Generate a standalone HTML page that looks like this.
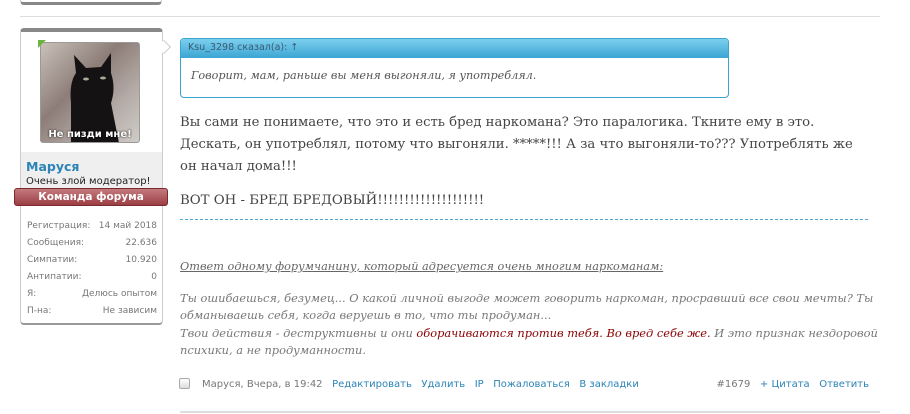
<!DOCTYPE html>
<html><head><meta charset="utf-8"><style>
*{margin:0;padding:0;box-sizing:border-box}
body{width:910px;height:414px;background:#fff;position:relative;overflow:hidden;font-family:"Liberation Sans",Tahoma,sans-serif}
.abs{position:absolute}
.sans{font-family:"DejaVu Sans","Liberation Sans",sans-serif}
.serif{font-family:"DejaVu Serif","Liberation Serif",serif}
.stat{position:absolute;left:27px;width:130px;font-size:9px;color:#777;font-family:"DejaVu Sans",sans-serif;display:flex;justify-content:space-between}
a{color:#2b83b8;text-decoration:none}
</style></head><body>
<div class="abs" style="left:20px;top:-6px;width:142px;height:11px;border:1px solid #ccc;border-bottom:3px solid #888;border-radius:0 0 4px 4px"></div>
<div class="abs" style="left:20px;top:16px;width:860px;height:1px;background:#ddd"></div>

<div class="abs" style="left:20px;top:28px;width:143px;height:297px;border:1px solid #ccc;border-top:4px solid #888;border-bottom:2px solid #999;border-radius:4px;background:#fff"></div>
<div class="abs" style="left:21px;top:152px;width:141px;height:36px;background:#efefef"></div>
<div class="abs" style="left:40px;top:42px;width:100px;height:101px;border:1px solid #999;border-radius:3px;background:linear-gradient(135deg,#c9c1b9,#8d7d78 40%,#b3aaa5 70%,#d0ccc8);overflow:hidden">
<svg width="100" height="100" style="position:absolute;left:0;top:0"><path d="M30 100 L30 60 Q28 40 35 30 L33 12 L45 25 L60 24 L70 10 L70 30 Q75 45 70 60 L78 100 Z" fill="#141212"/><ellipse cx="45" cy="36" rx="3" ry="1.5" fill="#aa9"/><ellipse cx="62" cy="35" rx="3" ry="1.5" fill="#aa9"/></svg>
<div class="sans" style="position:absolute;left:0;bottom:2px;width:100%;text-align:center;color:#fff;font-weight:bold;font-size:10px;text-shadow:0 0 2px #000">Не пизди мне!</div></div>
<div class="abs" style="left:38px;top:40px;width:0;height:0;border-top:8px solid #6db33f;border-right:8px solid transparent"></div>
<div class="abs" style="left:159px;top:42px;width:10px;height:10px;background:#fff;border-top:1px solid #ccc;border-right:1px solid #ccc;transform:rotate(45deg)"></div>
<div class="abs sans" style="left:26px;top:159px;font-size:12.5px;font-weight:bold;color:#2b83b8">Маруся</div>
<div class="abs sans" style="left:26px;top:176px;font-size:10px;color:#222">Очень злой модератор!</div>
<div class="abs sans" style="left:14px;top:188px;width:154px;height:18px;background:linear-gradient(#c47a7d,#9b3e44);border:1px solid #7a2a2f;border-radius:3px;color:#fff;font-size:10.5px;font-weight:bold;text-align:center;line-height:16px">Команда форума</div>
<div class="stat" style="top:221px"><span>Регистрация:</span><span>14 май 2018</span></div>
<div class="stat" style="top:238px"><span>Сообщения:</span><span>22.636</span></div>
<div class="stat" style="top:255px"><span>Симпатии:</span><span>10.920</span></div>
<div class="stat" style="top:272px"><span>Антипатии:</span><span>0</span></div>
<div class="stat" style="top:289px"><span>Я:</span><span>Делюсь опытом</span></div>
<div class="stat" style="top:306px"><span>П-на:</span><span>Не зависим</span></div>

<div class="abs" style="left:180px;top:38px;width:549px;height:60px;border:1px solid #3ba4d0;border-radius:4px;overflow:hidden">
<div class="sans" style="height:19px;background:linear-gradient(#7ccfee,#3ba5d3);color:#3a5a70;font-size:9.5px;padding:3px 7px">Ksu_3298 сказал(а): ↑</div>
<div class="serif" style="font-style:italic;font-size:11.2px;color:#555;padding:11px 10px">Говорит, мам, раньше вы меня выгоняли, я употреблял.</div></div>

<div class="abs serif" style="left:180px;top:112px;width:685px;font-size:13.2px;line-height:22px;color:#444">Вы сами не понимаете, что это и есть бред наркомана? Это паралогика. Ткните ему в это. Дескать, он употреблял, потому что выгоняли. *****!!! А за что выгоняли-то??? Употреблять же он начал дома!!!</div>
<div class="abs serif" style="left:180px;top:193px;font-size:13.3px;color:#444">ВОТ ОН - БРЕД БРЕДОВЫЙ!!!!!!!!!!!!!!!!!!!!</div>
<div class="abs" style="left:180px;top:219px;width:688px;border-top:1px dashed #4aa8cf"></div>
<div class="abs serif" style="left:180px;top:260px;font-size:11.3px;font-style:italic;color:#666;text-decoration:underline">Ответ одному форумчанину, который адресуется очень многим наркоманам:</div>
<div class="abs serif" style="left:180px;top:290px;width:702px;font-size:11.4px;line-height:17.3px;font-style:italic;color:#777">Ты ошибаешься, безумец... О какой личной выгоде может говорить наркоман, просравший все свои мечты? Ты обманываешь себя, когда веруешь в то, что ты продуман...<br>Твои действия - деструктивны и они <span style="color:#8b0000">оборачиваются против тебя. Во вред себе же.</span> И это признак нездоровой психики, а не продуманности.</div>

<div class="abs" style="left:179px;top:378px;width:11px;height:11px;border:1px solid #aaa;border-radius:2px;background:linear-gradient(#fff,#ddd)"></div>
<div class="abs sans" style="left:202px;top:379px;font-size:10px;color:#777;white-space:nowrap">Маруся, Вчера, в 19:42&nbsp;&nbsp; <a>Редактировать</a>&nbsp;&nbsp; <a>Удалить</a>&nbsp;&nbsp; <a>IP</a>&nbsp;&nbsp; <a>Пожаловаться</a>&nbsp;&nbsp; <a>В закладки</a></div>
<div class="abs sans" style="right:41px;top:379px;font-size:10px;color:#777;white-space:nowrap">#1679&nbsp;&nbsp; <a>+ Цитата</a>&nbsp;&nbsp; <a>Ответить</a></div>
<div class="abs" style="left:180px;top:411px;width:700px;height:2px;background:#ddd"></div>
</body></html>
